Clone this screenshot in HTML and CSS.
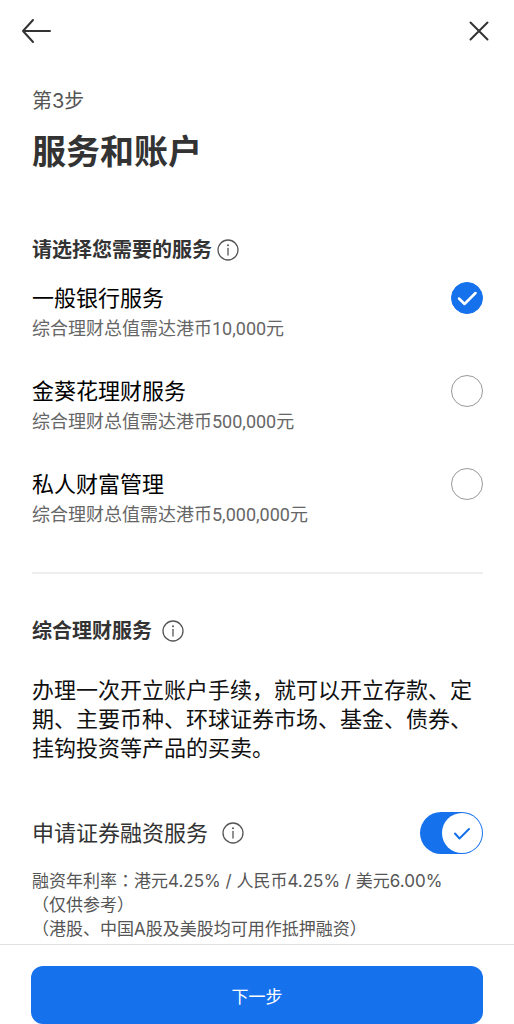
FILE: index.html
```html
<!DOCTYPE html>
<html lang="zh-CN">
<head>
  <meta charset="utf-8">
  <meta name="viewport" content="width=device-width, initial-scale=1">
  <title>服务和账户</title>
  <link rel="stylesheet" href="styles.css">
</head>
<body>
  <header class="topbar">
    <button type="button" class="icon-btn" aria-label="返回">
      <svg width="32" height="28" viewBox="0 0 32 28"><path d="M30 14H3M13 3L3 14l10 11"/></svg>
    </button>
    <button type="button" class="icon-btn" aria-label="关闭">
      <svg width="20" height="20" viewBox="0 0 20 20"><path d="M1.500 1.500l17 17M18.500 1.500l-17 17"/></svg>
    </button>
  </header>

  <main class="content">
    <p class="step">第3步</p>
    <h1>服务和账户</h1>

    <div class="heading">
      <h2 id="serviceLabel">请选择您需要的服务</h2>
      <button type="button" class="info-btn" aria-label="说明">
        <svg width="22" height="22" viewBox="0 0 22 22"><circle cx="11" cy="11" r="10"/><path d="M11 9.500v6.500"/><circle class="dot" cx="11" cy="6.200" r="1"/></svg>
      </button>
    </div>

    <div class="options" role="radiogroup" aria-labelledby="serviceLabel">
      <label class="option">
        <span class="option-text">
          <span class="option-title">一般银行服务</span>
          <span class="option-desc">综合理财总值需达港币10,000元</span>
        </span>
        <span class="radio">
          <input type="radio" name="service" value="general" checked>
          <svg class="tick" width="32" height="32" viewBox="0 0 32 32"><path d="M8 16.500l5.500 5.500L24.500 11"/></svg>
        </span>
      </label>
      <label class="option">
        <span class="option-text">
          <span class="option-title">金葵花理财服务</span>
          <span class="option-desc">综合理财总值需达港币500,000元</span>
        </span>
        <span class="radio">
          <input type="radio" name="service" value="sunflower">
          <svg class="tick" width="32" height="32" viewBox="0 0 32 32"><path d="M8 16.500l5.500 5.500L24.500 11"/></svg>
        </span>
      </label>
      <label class="option">
        <span class="option-text">
          <span class="option-title">私人财富管理</span>
          <span class="option-desc">综合理财总值需达港币5,000,000元</span>
        </span>
        <span class="radio">
          <input type="radio" name="service" value="private">
          <svg class="tick" width="32" height="32" viewBox="0 0 32 32"><path d="M8 16.500l5.500 5.500L24.500 11"/></svg>
        </span>
      </label>
    </div>

    <hr>

    <div class="heading heading-wide">
      <h2>综合理财服务</h2>
      <button type="button" class="info-btn" aria-label="说明">
        <svg width="22" height="22" viewBox="0 0 22 22"><circle cx="11" cy="11" r="10"/><path d="M11 9.500v6.500"/><circle class="dot" cx="11" cy="6.200" r="1"/></svg>
      </button>
    </div>
    <p class="intro">办理一次开立账户手续，就可以开立存款、定期、主要币种、环球证券市场、基金、债券、挂钩投资等产品的买卖。</p>

    <div class="margin-row">
      <label for="marginSwitch">申请证券融资服务</label>
      <button type="button" class="info-btn" aria-label="说明">
        <svg width="22" height="22" viewBox="0 0 22 22"><circle cx="11" cy="11" r="10"/><path d="M11 9.500v6.500"/><circle class="dot" cx="11" cy="6.200" r="1"/></svg>
      </button>
      <span class="switch">
        <input type="checkbox" role="switch" id="marginSwitch" checked>
        <svg class="knob" width="40" height="40" viewBox="0 0 40 40"><circle cx="20" cy="20" r="20"/><path d="M13 20.500l4.500 5L27 16"/></svg>
      </span>
    </div>
    <p class="note">
      融资年利率<span class="colon" lang="zh-TW">：</span>港元4.25% / 人民币4.25% / 美元6.00%<br>
      （仅供参考）<br>
      （港股、中国A股及美股均可用作抵押融资）
    </p>
  </main>

  <footer class="bottom">
    <button type="button" class="next-btn">下一步</button>
  </footer>
</body>
</html>
```
FILE: styles.css
```css
* { box-sizing: border-box; }
body { margin: 0; background: #fff; color: #333; font-family: Inter, "Noto Sans CJK SC", sans-serif; }
h1, h2, p { margin: 0; }
button { padding: 0; border: none; background: none; font-family: inherit; cursor: pointer; }
svg { display: block; fill: none; stroke-linecap: round; stroke-linejoin: round; }

.topbar { display: flex; justify-content: space-between; align-items: center; height: 62px; padding: 0 25px 0 20px; }
.icon-btn svg { stroke: #333; stroke-width: 2; }

.content { padding: 25px 31px 3px 32px; }
.step { font-size: 20px; line-height: 28px; color: #555; }
h1 { margin-top: 15px; font-size: 34px; line-height: 44px; font-weight: 700; }

.heading { display: flex; align-items: center; gap: 5px; margin-top: 62px; }
.heading-wide { gap: 10px; margin-top: 43px; }
h2 { font-size: 20px; line-height: 28px; font-weight: 700; }
.info-btn svg { stroke: #555; stroke-width: 1.3; }
.info-btn .dot { fill: #555; stroke: none; }

.options { display: grid; gap: 34px; margin-top: 18px; }
.option { display: flex; justify-content: space-between; align-items: flex-start; cursor: pointer; }
.option-text { display: grid; gap: 3px; }
.option-title { font-size: 22px; line-height: 32px; color: #000; }
.option-desc { font-family: Roboto, "Noto Sans CJK SC", sans-serif; font-size: 18px; line-height: 24px; color: #666; }

.radio { position: relative; width: 32px; height: 32px; }
.radio input { display: block; appearance: none; width: 32px; height: 32px; margin: 0; border: 1px solid #999; border-radius: 50%; }
.radio input:checked { border-color: #1671ed; background: #1671ed; }
.tick { position: absolute; inset: 0; stroke: #fff; stroke-width: 2.5; visibility: hidden; pointer-events: none; }
.radio input:checked + .tick { visibility: visible; }

hr { height: 2px; margin: 45px 0 0; border: none; background: #eee; }
.intro { margin-top: 31px; font-size: 22px; line-height: 29px; color: #111; }

.margin-row { display: flex; align-items: center; margin-top: 49px; }
.margin-row label { margin-right: 14px; font-size: 22px; line-height: 32px; }
.switch { position: relative; width: 63px; height: 42px; margin-left: auto; }
.switch input { display: block; appearance: none; width: 100%; height: 100%; margin: 0; border-radius: 21px; background: #bbb; cursor: pointer; }
.switch input:checked { background: #1671ed; }
.knob { position: absolute; top: 1px; left: 1px; pointer-events: none; }
.switch input:checked + .knob { left: auto; right: 1px; }
.knob circle { fill: #fff; }
.knob path { stroke: #1671ed; stroke-width: 2; }

.note { margin-top: 14px; font-size: 17px; line-height: 24px; color: #555; }
.colon { font-family: "Noto Sans CJK TC", sans-serif; }

.bottom { position: sticky; bottom: 0; padding: 21px 31px 0; border-top: 1px solid #e2e2e2; background: #fff; }
.next-btn { display: block; width: 100%; height: 58px; border-radius: 12px; background: #1671ed; color: #fff; font-size: 17px; }
```
